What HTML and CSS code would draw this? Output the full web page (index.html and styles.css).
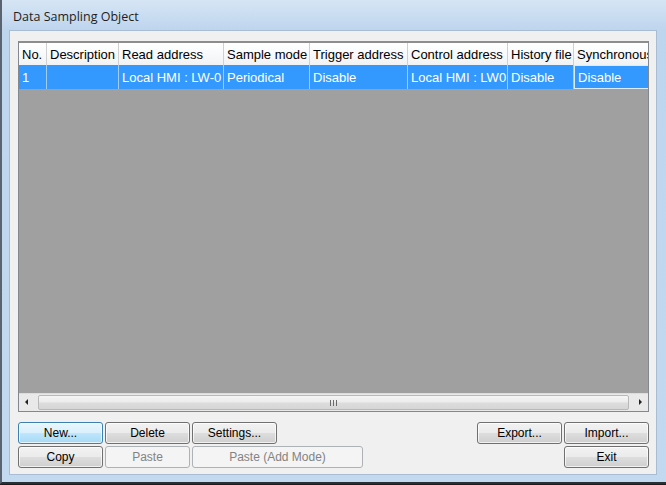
FILE: index.html
```html
<!DOCTYPE html>
<html lang="en-US">
    <head>
        <meta charset="UTF-8">
        <title>Data Sampling Object</title>
<link rel="stylesheet" href="styles.css">
    </head>
    <body>
        <div class="window">
            <div class="titlebar">Data Sampling Object</div>
            <div class="client">
                <div class="list">
                    <div class="row head">
                        <div>No.</div>
                        <div>Description</div>
                        <div>Read address</div>
                        <div>Sample mode</div>
                        <div>Trigger address</div>
                        <div>Control address</div>
                        <div>History file</div>
                        <div>Synchronous</div>
                    </div>
                    <div class="row selected">
                        <div>1</div>
                        <div></div>
                        <div>Local HMI : LW-0</div>
                        <div>Periodical</div>
                        <div>Disable</div>
                        <div>Local HMI : LW0</div>
                        <div>Disable</div>
                        <div class="focus">Disable</div>
                    </div>
                    <div class="empty"></div>
                    <div class="hscroll">
                        <span class="arrow left"></span>
                        <div class="thumb"><span class="grip"></span></div>
                        <span class="arrow right"></span>
                    </div>
                </div>

                <div class="buttons">
                    <div class="btnrow">
                        <button class="btn focused">New...</button>
                        <button class="btn">Delete</button>
                        <button class="btn">Settings...</button>
                        <span class="spacer"></span>
                        <button class="btn">Export...</button>
                        <button class="btn">Import...</button>
                    </div>
                    <div class="btnrow">
                        <button class="btn">Copy</button>
                        <button class="btn" disabled>Paste</button>
                        <button class="btn wide" disabled>Paste (Add Mode)</button>
                        <span class="spacer"></span>
                        <button class="btn">Exit</button>
                    </div>
                </div>
            </div>
        </div>
    </body>
</html>
```

FILE: styles.css
```css
html,body {
    margin: 0;
    padding: 0;
    background: #1c1c1c;
}
.window {
    width: 666px;
    height: 484px;
    box-sizing: border-box;
    border-left: 2px solid #5a6470;
    border-bottom: 2px solid #2a2f35;
    background: linear-gradient(180deg, #d6e5f4 0, #bed5ee 30px, #c3d9ef 100%);
    display: flex;
    flex-direction: column;
    padding: 0 9px 7px 7px;
    font-family: "Liberation Sans", Arial, sans-serif;
    font-size: 12px;
}
.titlebar {
    height: 30px;
    line-height: 34px;
    padding-left: 4px;
    font-family: "Open Sans", "Noto Sans", sans-serif;
    font-size: 12.5px;
    color: #1e1e1e;
}
.client {
    flex: 1;
    background: #f0f0f0;
    border: 1px solid #a8bcd3;
    padding: 10px 7px 0 8px;
    display: flex;
    flex-direction: column;
}

/* list view */
.list {
    height: 370px;
    border: 1px solid #828790;
    border-top: none;
    display: flex;
    flex-direction: column;
    background: #a0a0a0;
    font-size: 13px;
}
.row {
    display: grid;
    grid-template-columns: 28px 72px 105px 86px 98px 100px 66px 1fr;
    height: 24px;
    overflow: hidden;
}
.row div {
    padding: 0 3px;
    line-height: 25px;
    white-space: nowrap;
    overflow: hidden;
    border-right: 1px solid #d5d5d5;
}
.head {
    background: linear-gradient(180deg, #ffffff 0, #f7f8fa 60%, #f1f2f4 100%);
    color: #000;
    border-top: 2px solid #8d8d8d;
    height: 22px;
}
.head div {
    line-height: 23px;
    border-right: 1px solid #d0d0d0;
}
.head div:last-child {
    border-right: none;
}
.selected {
    background: #3399ff;
    color: #fff;
}
.selected div {
    border-right: 1px solid #a0cdf7;
}
.selected .focus {
    border: 1px solid #dcecff;
    border-right: none;
    line-height: 23px;
}
.empty {
    flex: 1;
    background: #a0a0a0;
}

/* horizontal scrollbar */
.hscroll {
    height: 17px;
    background: #e9e9e9;
    border-top: 1px solid #dcdcdc;
    display: flex;
    align-items: stretch;
}
.arrow {
    width: 17px;
    position: relative;
}
.arrow::after {
    content: "";
    position: absolute;
    top: 5px;
    border-top: 3px solid transparent;
    border-bottom: 3px solid transparent;
}
.arrow.left::after {
    left: 6px;
    border-right: 3px solid #222;
}
.arrow.right::after {
    left: 8px;
    border-left: 3px solid #222;
}
.thumb {
    flex: 1;
    margin: 1px 2px;
    border: 1px solid #b8b8b8;
    border-radius: 2px;
    background: linear-gradient(180deg, #f6f6f6 0, #ececec 45%, #dcdcdc 55%, #d6d6d6 100%);
    display: flex;
    align-items: center;
    justify-content: center;
}
.grip {
    width: 7px;
    height: 6px;
    background: repeating-linear-gradient(90deg, #6a6a6a 0 1px, transparent 1px 3px);
}

/* buttons */
.buttons {
    margin-top: 10px;
    display: flex;
    flex-direction: column;
    gap: 2px;
}
.btnrow {
    display: flex;
    gap: 2px;
}
.spacer {
    flex: 1;
}
.btn {
    width: 85px;
    height: 22px;
    padding: 0;
    border: 1px solid #707070;
    border-radius: 3px;
    background: linear-gradient(180deg, #f2f2f2 0, #ebebeb 48%, #dddddd 52%, #cfcfcf 100%);
    font-family: "Liberation Sans", Arial, sans-serif;
    font-size: 12px;
    color: #000;
    box-shadow: inset 0 0 0 1px rgba(255,255,255,0.7);
}
.btn.focused {
    border-color: #3c7fb1;
    background: linear-gradient(180deg, #eaf6fd 0, #d9f0fc 48%, #bee6fd 52%, #a7d9f5 100%);
}
.btn:disabled {
    border-color: #adb2b5;
    background: #f4f4f4;
    color: #838383;
    box-shadow: none;
}
.btn.wide {
    width: 171px;
}
```
